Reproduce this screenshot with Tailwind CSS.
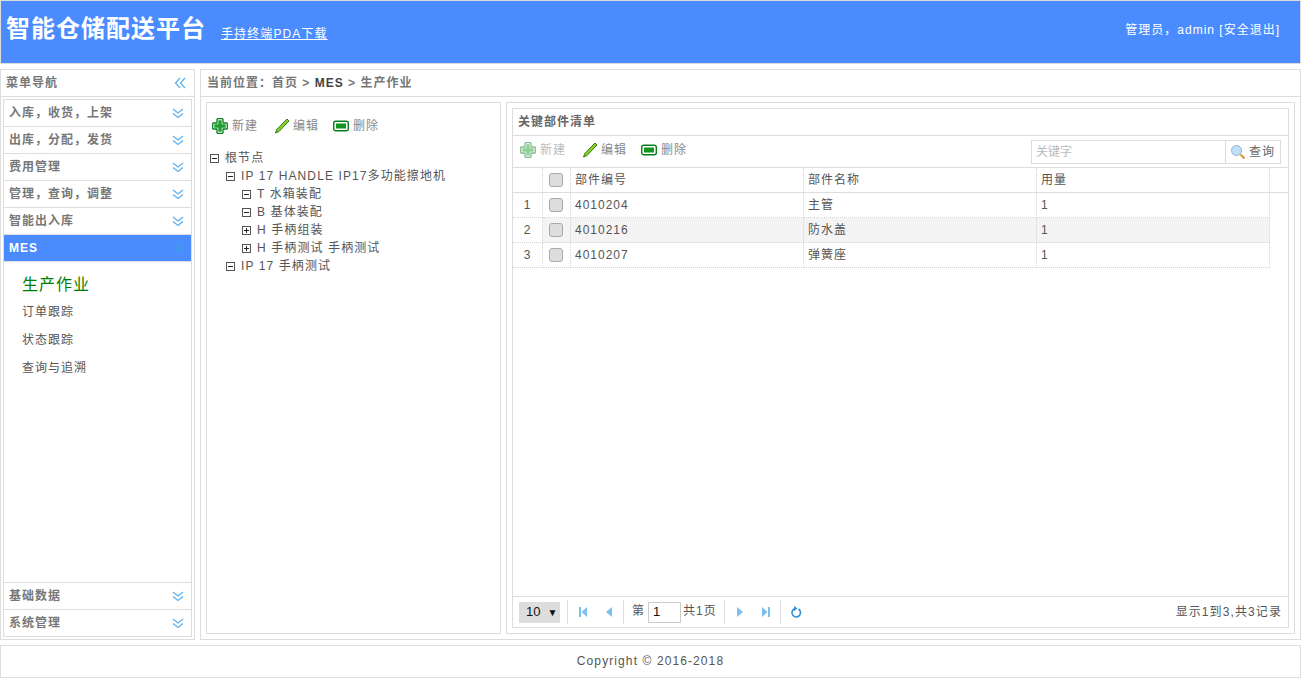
<!DOCTYPE html>
<html lang="zh-CN">
<head>
<meta charset="UTF-8">
<title>智能仓储配送平台</title>
<script src="https://cdn.jsdelivr.net/npm/@tailwindcss/browser@4"></script>
</head>
<body class="h-[678px] w-[1301px] overflow-hidden bg-white text-[12px] tracking-[1px] text-[#555] font-['Liberation_Sans','Noto_Sans_CJK_SC',sans-serif]">

<svg width="0" height="0" class="absolute">
  <defs>
    <symbol id="dd" viewBox="0 0 12 12"><path d="M1 2l5 4 5-4M1 6.500l5 4 5-4" fill="none" stroke="#5cb0ec" stroke-width="1.300"/></symbol>
    <symbol id="add" viewBox="0 0 16 16"><path d="M5.500 .7h5l.5.5v3.800h3.800l.5.5v5l-.5.5H11v3.800l-.5.5h-5l-.5-.5V11H1.200l-.5-.5v-5l.5-.5H5V1.200z" fill="#fff" stroke="#0a7d1e" stroke-width="1.300" stroke-linejoin="round"/><path d="M6.300 2.300h3.400v4h4v3.400h-4v4H6.300v-4h-4V6.300h4z" fill="#1f9e2e"/></symbol>
    <symbol id="edit" viewBox="0 0 16 16"><path d="M13 1l2 2L5 13.500 1.500 15 2.800 11.500z" fill="#8ccc2e" stroke="#2e7d12" stroke-width="1"/></symbol>
    <symbol id="del" viewBox="0 0 16 16"><rect x="0.700" y="3.200" width="14.600" height="9.600" rx="2" fill="#fff" stroke="#0a7d1e" stroke-width="1.400"/><rect x="3" y="5.500" width="10" height="5" fill="#12941f"/></symbol>
    <symbol id="minus" viewBox="0 0 9 9"><rect x="0.500" y="0.500" width="8" height="8" fill="#fff" stroke="#555"/><path d="M2 4.500h5" stroke="#222"/></symbol>
    <symbol id="plus" viewBox="0 0 9 9"><rect x="0.500" y="0.500" width="8" height="8" fill="#fff" stroke="#555"/><path d="M2 4.500h5M4.500 2v5" stroke="#222"/></symbol>
  </defs>
</svg>

<header class="flex h-[64px] items-center justify-between border border-[#ddd] bg-[#4a8cff] pl-[5px] pr-[20px] text-white">
  <div class="flex items-center">
    <span class="mb-[6px] text-[24px] font-bold leading-none">智能仓储配送平台</span>
    <a class="ml-[15px] mt-[4px] underline tracking-[1.1px]">手持终端PDA下载</a>
  </div>
  <div class="mb-[4px]">管理员，admin [安全退出]</div>
</header>

<div class="mt-[5px] flex h-[571px] gap-[5px]">
  <!-- 左侧菜单 -->
  <aside class="flex w-[195px] flex-col border border-[#ddd]">
    <div class="flex h-[27px] shrink-0 items-center justify-between border-b border-[#ddd] pl-[5px] pr-[8px] font-bold text-[#777]">
      <span>菜单导航</span>
      <svg width="12" height="12" viewBox="0 0 12 12"><path d="M6 1L1.500 6 6 11M11 1L6.500 6 11 11" fill="none" stroke="#5cb0ec" stroke-width="1.200"/></svg>
    </div>
    <div class="m-[2px] flex flex-1 flex-col border border-[#ddd]">
      <div class="flex h-[27px] items-center justify-between border-b border-[#ddd] pl-[5px] pr-[7px] font-bold text-[#777]"><span>入库，收货，上架</span><svg width="12" height="12"><use href="#dd"/></svg></div>
      <div class="flex h-[27px] items-center justify-between border-b border-[#ddd] pl-[5px] pr-[7px] font-bold text-[#777]"><span>出库，分配，发货</span><svg width="12" height="12"><use href="#dd"/></svg></div>
      <div class="flex h-[27px] items-center justify-between border-b border-[#ddd] pl-[5px] pr-[7px] font-bold text-[#777]"><span>费用管理</span><svg width="12" height="12"><use href="#dd"/></svg></div>
      <div class="flex h-[27px] items-center justify-between border-b border-[#ddd] pl-[5px] pr-[7px] font-bold text-[#777]"><span>管理，查询，调整</span><svg width="12" height="12"><use href="#dd"/></svg></div>
      <div class="flex h-[27px] items-center justify-between border-b border-[#ddd] pl-[5px] pr-[7px] font-bold text-[#777]"><span>智能出入库</span><svg width="12" height="12"><use href="#dd"/></svg></div>
      <div class="flex h-[27px] items-center justify-between border-b border-[#ddd] bg-[#4a8cff] pl-[5px] pr-[7px] font-bold text-white">
        <span>MES</span>
        <svg width="12" height="12" viewBox="0 0 12 12"><path d="M1 6l5-4 5 4M1 10.500l5-4 5 4" fill="none" stroke="#3f9fe0" stroke-width="1.300"/></svg>
      </div>
      <div class="flex-1 pl-[18px] pt-[11px]">
        <div class="h-[24px] text-[16px] leading-[24px] text-[#008000]">生产作业</div>
        <div class="mt-[1px] h-[28px] leading-[28px]">订单跟踪</div>
        <div class="h-[28px] leading-[28px]">状态跟踪</div>
        <div class="h-[28px] leading-[28px]">查询与追溯</div>
      </div>
      <div class="flex h-[27px] items-center justify-between border-t border-[#ddd] pl-[5px] pr-[7px] font-bold text-[#777]"><span>基础数据</span><svg width="12" height="12"><use href="#dd"/></svg></div>
      <div class="flex h-[27px] items-center justify-between border-t border-[#ddd] pl-[5px] pr-[7px] font-bold text-[#777]"><span>系统管理</span><svg width="12" height="12"><use href="#dd"/></svg></div>
    </div>
  </aside>

  <!-- 主区域 -->
  <main class="flex w-[1101px] flex-col border border-[#ddd]">
    <div class="flex h-[27px] shrink-0 items-center border-b border-[#ddd] pl-[6px] font-bold text-[#777]">
      当前位置：首页 &gt;&nbsp;<span class="text-[#444]">MES</span>&nbsp;&gt; 生产作业
    </div>
    <div class="flex flex-1 gap-[5px] p-[5px]">
      <!-- 树 -->
      <section class="w-[295px] border border-[#ddd]">
        <div class="flex h-[46px] items-center pl-[5px] text-[#888]">
          <span class="mr-[16px] flex items-center gap-[4px]"><svg width="16" height="16"><use href="#add"/></svg>新建</span>
          <span class="mr-[14px] flex items-center gap-[3px]"><svg width="16" height="16"><use href="#edit"/></svg>编辑</span>
          <span class="flex items-center gap-[4px]"><svg width="16" height="16"><use href="#del"/></svg>删除</span>
        </div>
        <ul class="tracking-[1.1px]">
          <li class="flex h-[18px] items-center pl-[3px]"><svg class="mr-[6px]" width="9" height="9"><use href="#minus"/></svg>根节点</li>
          <li class="flex h-[18px] items-center pl-[19px]"><svg class="mr-[6px]" width="9" height="9"><use href="#minus"/></svg>IP 17 HANDLE IP17多功能擦地机</li>
          <li class="flex h-[18px] items-center pl-[35px]"><svg class="mr-[6px]" width="9" height="9"><use href="#minus"/></svg>T 水箱装配</li>
          <li class="flex h-[18px] items-center pl-[35px]"><svg class="mr-[6px]" width="9" height="9"><use href="#minus"/></svg>B 基体装配</li>
          <li class="flex h-[18px] items-center pl-[35px]"><svg class="mr-[6px]" width="9" height="9"><use href="#plus"/></svg>H 手柄组装</li>
          <li class="flex h-[18px] items-center pl-[35px]"><svg class="mr-[6px]" width="9" height="9"><use href="#plus"/></svg>H 手柄测试 手柄测试</li>
          <li class="flex h-[18px] items-center pl-[19px]"><svg class="mr-[6px]" width="9" height="9"><use href="#minus"/></svg>IP 17 手柄测试</li>
        </ul>
      </section>

      <!-- 清单 -->
      <section class="flex w-[789px] flex-col border border-[#ddd] p-[5px]">
        <div class="flex flex-1 flex-col border border-[#ddd]">
          <div class="flex h-[27px] shrink-0 items-center border-b border-[#ddd] pl-[5px] font-bold text-[#666]">关键部件清单</div>
          <div class="flex h-[32px] shrink-0 items-center justify-between border-b border-[#ddd] pl-[7px] pr-[7px] text-[#888]">
            <div class="mb-[4px] flex items-center">
              <span class="mr-[16px] flex items-center gap-[4px] text-[#bbb]"><svg class="opacity-50" width="16" height="16"><use href="#add"/></svg>新建</span>
              <span class="mr-[14px] flex items-center gap-[3px]"><svg width="16" height="16"><use href="#edit"/></svg>编辑</span>
              <span class="flex items-center gap-[4px]"><svg width="16" height="16"><use href="#del"/></svg>删除</span>
            </div>
            <div class="flex h-[24px] w-[250px] border border-[#ddd]">
              <span class="flex-1 pl-[4px] leading-[22px] tracking-[0px] text-[#bbb]">关键字</span>
              <span class="flex w-[55px] items-center gap-[3px] border-l border-[#ddd] pl-[4px] text-[#666]">
                <svg width="16" height="16" viewBox="0 0 16 16"><circle cx="6.500" cy="6.500" r="5" fill="#bfe0fa" stroke="#8fb4d0"/><path d="M10.500 10.500l4 4" stroke="#e0902a" stroke-width="2"/></svg>查询
              </span>
            </div>
          </div>
          <div class="h-[25px] shrink-0 border-b border-[#ddd]">
            <table class="w-[757px] table-fixed border-separate border-spacing-0">
              <colgroup><col class="w-[30px]"><col class="w-[28px]"><col class="w-[233px]"><col class="w-[233px]"><col class="w-[233px]"></colgroup>
              <tr class="h-[24px]">
                <th class="border-r border-dotted border-[#d4d4d4]"></th>
                <th class="border-r border-dotted border-[#d4d4d4]"><input type="checkbox" class="ml-[6px] block h-[14px] w-[14px] appearance-none rounded-[3px] border border-[#aaa] bg-[#ddd]"></th>
                <th class="border-r border-dotted border-[#d4d4d4] pl-[4px] text-left font-normal">部件编号</th>
                <th class="border-r border-dotted border-[#d4d4d4] pl-[4px] text-left font-normal">部件名称</th>
                <th class="border-r border-dotted border-[#d4d4d4] pl-[4px] text-left font-normal">用量</th>
              </tr>
            </table>
          </div>
          <table class="w-[757px] table-fixed border-separate border-spacing-0">
            <colgroup><col class="w-[30px]"><col class="w-[28px]"><col class="w-[233px]"><col class="w-[233px]"><col class="w-[233px]"></colgroup>
            <tbody>
              <tr class="h-[25px]">
                <td class="border-b border-r border-dotted border-[#d4d4d4] text-center">1</td>
                <td class="border-b border-r border-dotted border-[#d4d4d4]"><input type="checkbox" class="ml-[6px] block h-[14px] w-[14px] appearance-none rounded-[3px] border border-[#aaa] bg-[#ddd]"></td>
                <td class="border-b border-r border-dotted border-[#d4d4d4] pl-[4px]">4010204</td>
                <td class="border-b border-r border-dotted border-[#d4d4d4] pl-[4px]">主管</td>
                <td class="border-b border-r border-dotted border-[#d4d4d4] pl-[4px]">1</td>
              </tr>
              <tr class="h-[25px]">
                <td class="border-b border-r border-dotted border-[#d4d4d4] text-center">2</td>
                <td class="border-b border-r border-dotted border-[#d4d4d4] bg-[#f4f4f4]"><input type="checkbox" class="ml-[6px] block h-[14px] w-[14px] appearance-none rounded-[3px] border border-[#aaa] bg-[#ddd]"></td>
                <td class="border-b border-r border-dotted border-[#d4d4d4] bg-[#f4f4f4] pl-[4px]">4010216</td>
                <td class="border-b border-r border-dotted border-[#d4d4d4] bg-[#f4f4f4] pl-[4px]">防水盖</td>
                <td class="border-b border-r border-dotted border-[#d4d4d4] bg-[#f4f4f4] pl-[4px]">1</td>
              </tr>
              <tr class="h-[25px]">
                <td class="border-b border-r border-dotted border-[#d4d4d4] text-center">3</td>
                <td class="border-b border-r border-dotted border-[#d4d4d4]"><input type="checkbox" class="ml-[6px] block h-[14px] w-[14px] appearance-none rounded-[3px] border border-[#aaa] bg-[#ddd]"></td>
                <td class="border-b border-r border-dotted border-[#d4d4d4] pl-[4px]">4010207</td>
                <td class="border-b border-r border-dotted border-[#d4d4d4] pl-[4px]">弹簧座</td>
                <td class="border-b border-r border-dotted border-[#d4d4d4] pl-[4px]">1</td>
              </tr>
            </tbody>
          </table>
          <div class="mt-auto flex h-[31px] shrink-0 items-center border-t border-[#ddd] pl-[6px] pr-[6px]">
            <span class="flex h-[21px] w-[41px] items-center gap-[7px] bg-[#ddd] pl-[7px] text-[13px] tracking-[0px] text-[#111]">10<span class="text-[10px]">▼</span></span>
            <span class="ml-[7px] h-[24px] border-l border-[#ddd]"></span>
            <svg class="ml-[9px]" width="12" height="12" viewBox="0 0 12 12"><path d="M2 1h2v10H2zM10 1v10L4.500 6z" fill="#7cc0f0"/></svg>
            <svg class="ml-[14px]" width="12" height="12" viewBox="0 0 12 12"><path d="M9 1v10L3 6z" fill="#7cc0f0"/></svg>
            <span class="ml-[8px] h-[24px] border-l border-[#ddd]"></span>
            <span class="mb-[2px] ml-[8px]">第</span>
            <span class="ml-[3px] flex h-[21px] w-[33px] items-center border border-[#ccc] pl-[4px] text-[13px] tracking-[0px] text-[#111]">1</span>
            <span class="mb-[2px] ml-[2px]">共1页</span>
            <span class="ml-[7px] h-[24px] border-l border-[#ddd]"></span>
            <svg class="ml-[9px]" width="12" height="12" viewBox="0 0 12 12"><path d="M3 1v10l6-5z" fill="#7cc0f0"/></svg>
            <svg class="ml-[14px]" width="12" height="12" viewBox="0 0 12 12"><path d="M2 1v10l5.500-5zM8 1h2v10H8z" fill="#7cc0f0"/></svg>
            <span class="ml-[8px] h-[24px] border-l border-[#ddd]"></span>
            <svg class="ml-[9px]" width="12" height="12" viewBox="0 0 12 12"><path d="M4.500 2.700A4.300 4.300 0 1 0 8.500 3" fill="none" stroke="#2f8fd8" stroke-width="1.600"/><path d="M4 0l3.500 2.500L4 5z" fill="#2f8fd8"/></svg>
            <span class="ml-auto tracking-[1.1px]">显示1到3,共3记录</span>
          </div>
        </div>
      </section>
    </div>
  </main>
</div>

<footer class="mt-[5px] flex h-[33px] items-center justify-center border border-[#ddd] pb-[2px] tracking-[1.1px]">Copyright © 2016-2018</footer>
</body>
</html>
